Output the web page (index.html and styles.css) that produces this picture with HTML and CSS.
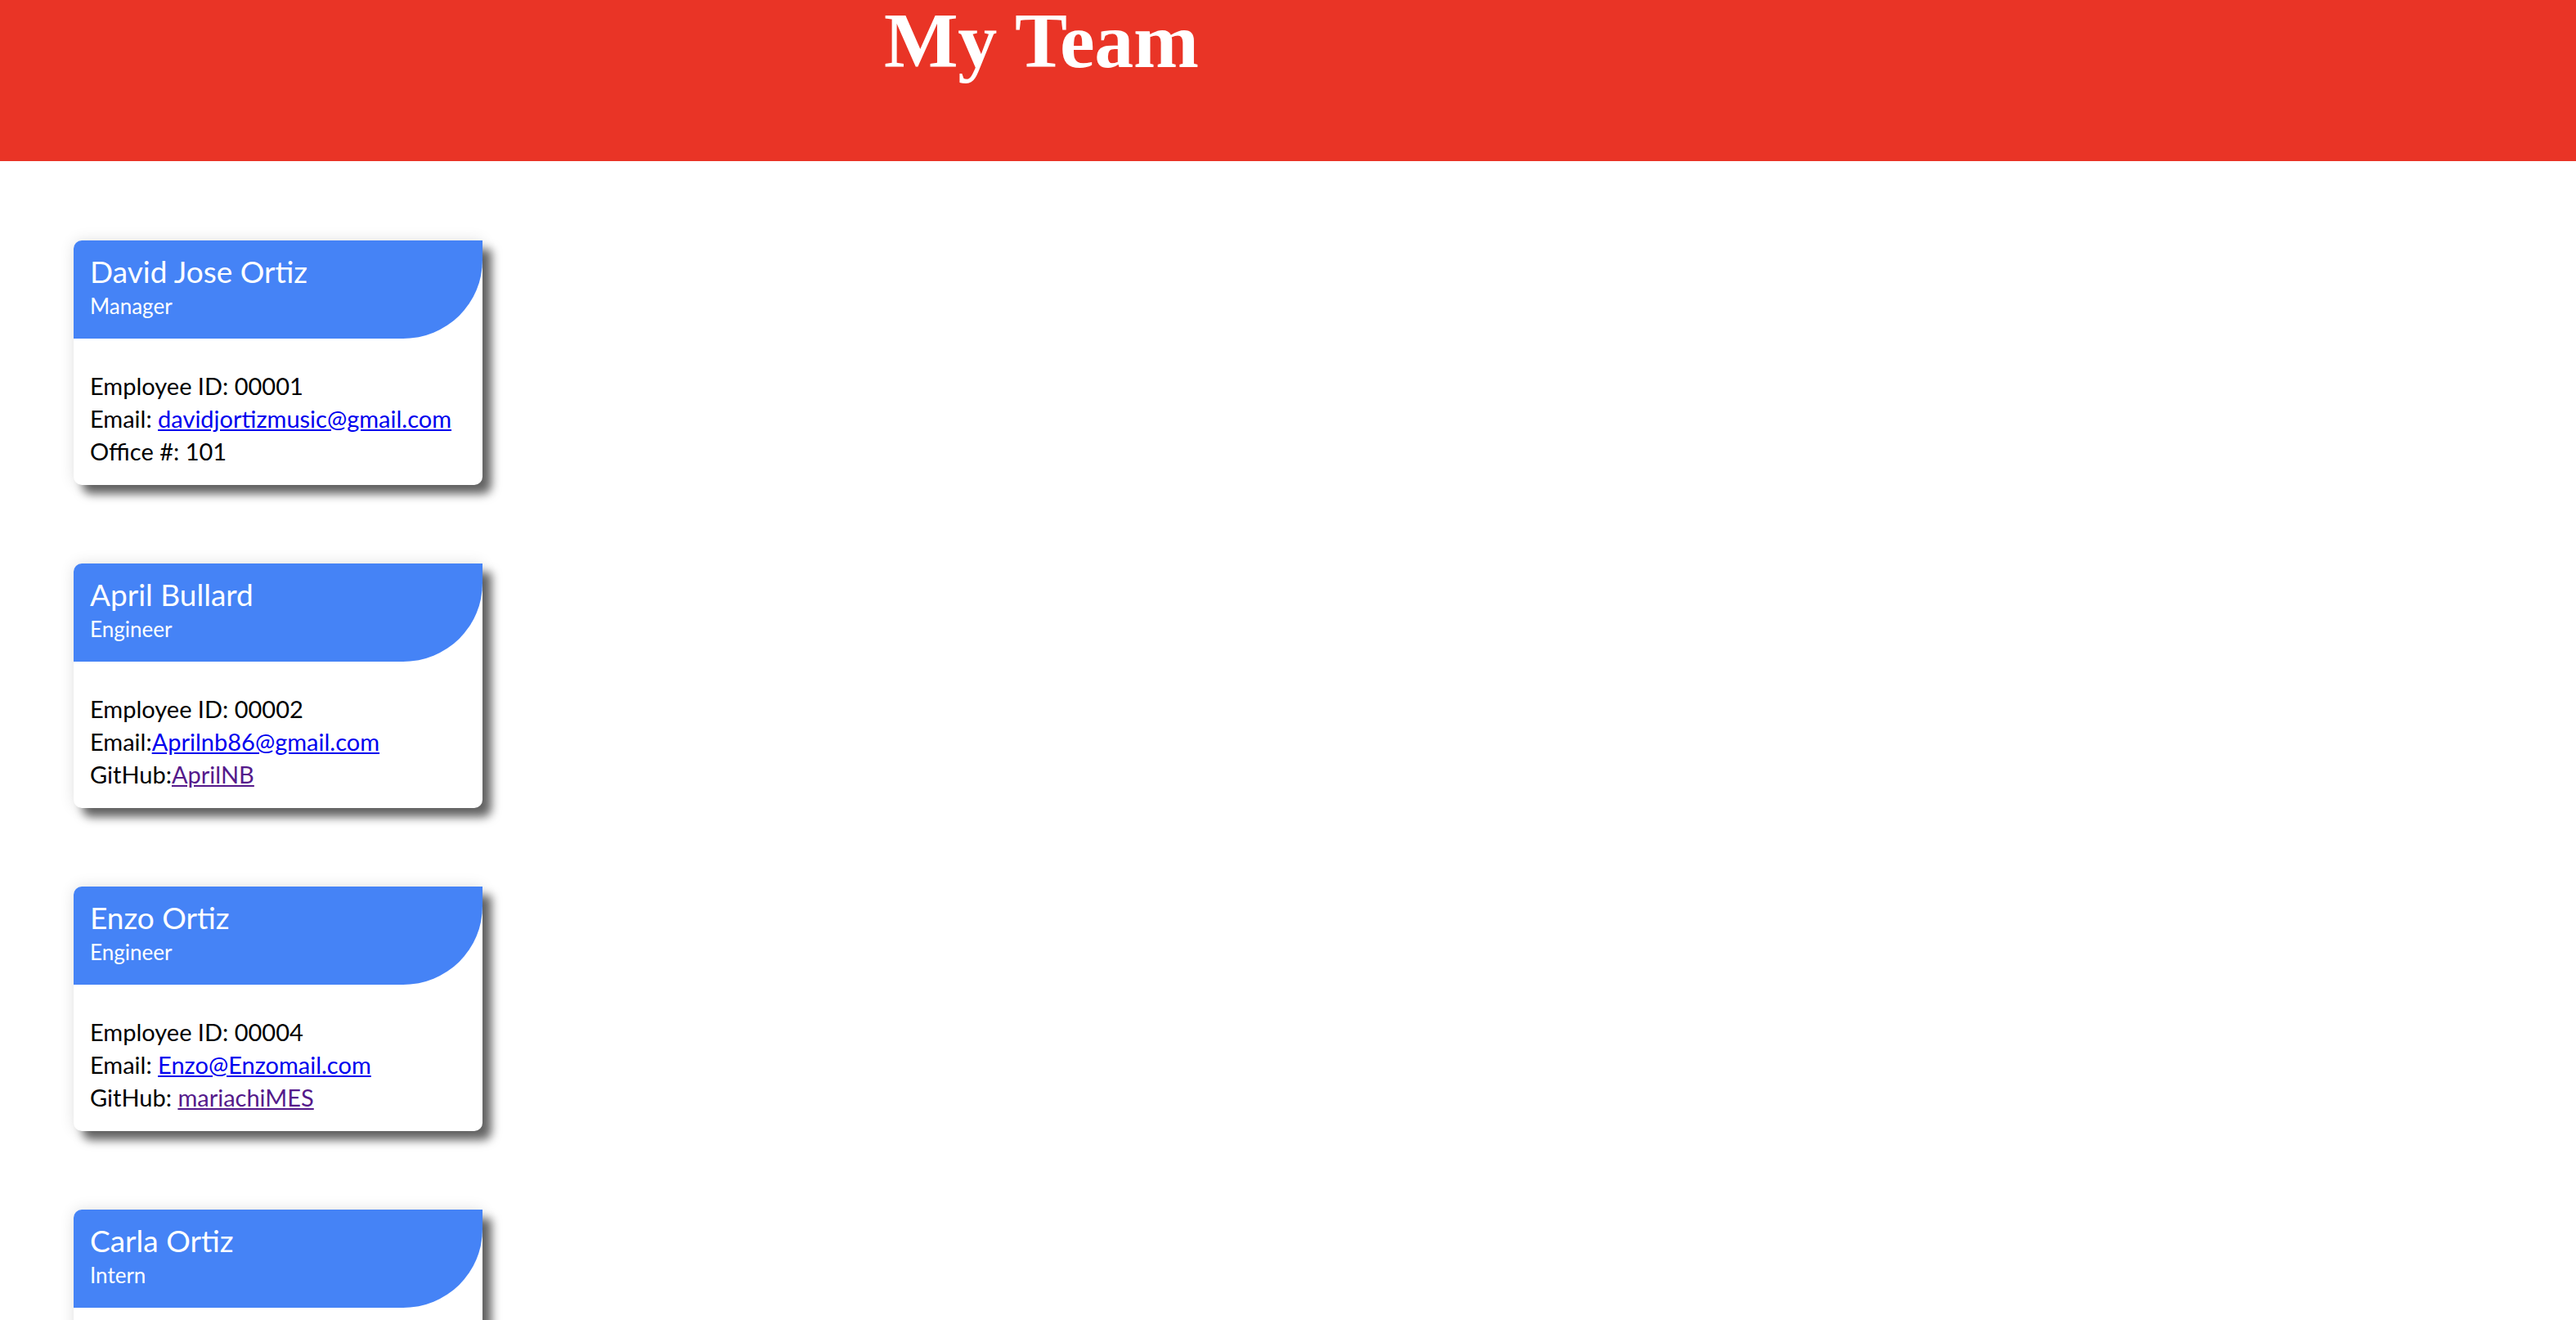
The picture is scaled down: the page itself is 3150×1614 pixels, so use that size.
FILE: index.html
```html
<!DOCTYPE html>
<html lang="en">
<head>
<meta charset="utf-8">
<title>My Team</title>
<link rel="stylesheet" href="styles.css">
</head>
<body>
<header class="banner">
  <h1 class="banner-title">My Team</h1>
</header>
<main class="team">
  <section class="card">
    <div class="card-head">
      <h2 class="card-name">David Jose Ortiz</h2>
      <p class="card-role">Manager</p>
    </div>
    <div class="card-body">
      <p class="card-line">Employee ID: 00001</p>
      <p class="card-line">Email: <a class="link-mail" href="mailto:davidjortizmusic@gmail.com">davidjortizmusic@gmail.com</a></p>
      <p class="card-line">Office #: 101</p>
    </div>
  </section>
  <section class="card">
    <div class="card-head">
      <h2 class="card-name">April Bullard</h2>
      <p class="card-role">Engineer</p>
    </div>
    <div class="card-body">
      <p class="card-line">Employee ID: 00002</p>
      <p class="card-line">Email:<a class="link-mail" href="mailto:Aprilnb86@gmail.com">Aprilnb86@gmail.com</a></p>
      <p class="card-line">GitHub:<a class="link-visited" href="#">AprilNB</a></p>
    </div>
  </section>
  <section class="card">
    <div class="card-head">
      <h2 class="card-name">Enzo Ortiz</h2>
      <p class="card-role">Engineer</p>
    </div>
    <div class="card-body">
      <p class="card-line">Employee ID: 00004</p>
      <p class="card-line">Email: <a class="link-mail" href="mailto:Enzo@Enzomail.com">Enzo@Enzomail.com</a></p>
      <p class="card-line">GitHub: <a class="link-visited" href="#">mariachiMES</a></p>
    </div>
  </section>
  <section class="card">
    <div class="card-head">
      <h2 class="card-name">Carla Ortiz</h2>
      <p class="card-role">Intern</p>
    </div>
    <div class="card-body card-body-empty"></div>
  </section>
</main>
</body>
</html>
```
FILE: styles.css
```css
html, body {
  margin: 0;
  padding: 0;
  background: #ffffff;
}

body {
  font-family: "Lato", "Open Sans", "DejaVu Sans", sans-serif;
  color: #000000;
}

.banner {
  background: #e93426;
  height: 197px;
  box-sizing: border-box;
  padding: 2px 0 0 1081px;
}

.banner-title {
  margin: 0;
  font-family: "Liberation Serif", "Times New Roman", serif;
  font-weight: bold;
  font-size: 96px;
  line-height: 96px;
  letter-spacing: -0.3px;
  color: #ffffff;
}

.team {
  display: flex;
  flex-direction: column;
  align-items: flex-start;
  gap: 96px;
  padding: 97px 0 0 90px;
}

.card {
  width: 500px;
  background: #ffffff;
  border-radius: 10px 0 10px 10px;
  box-shadow: 11px 11px 12px rgba(0, 0, 0, 0.6), 0 0 18px rgba(0, 0, 0, 0.12);
  overflow: hidden;
}

.card-head {
  background: #4583f6;
  color: #ffffff;
  height: 120px;
  box-sizing: border-box;
  padding: 18px 20px 0 20px;
  border-bottom-right-radius: 97px 96px;
}

.card-name {
  margin: 0;
  font-size: 37px;
  font-weight: 400;
  line-height: 40px;
}

.card-role {
  margin: 4px 0 0 0;
  font-size: 26px;
  font-weight: 400;
  line-height: 36px;
}

.card-body {
  padding: 38px 20px 21px 20px;
}

.card-body-empty {
  min-height: 120px;
}

.card-line {
  margin: 0;
  font-size: 29px;
  line-height: 40px;
}

.link-mail {
  color: #0000ee;
}

.link-visited {
  color: #551a8b;
}
```
